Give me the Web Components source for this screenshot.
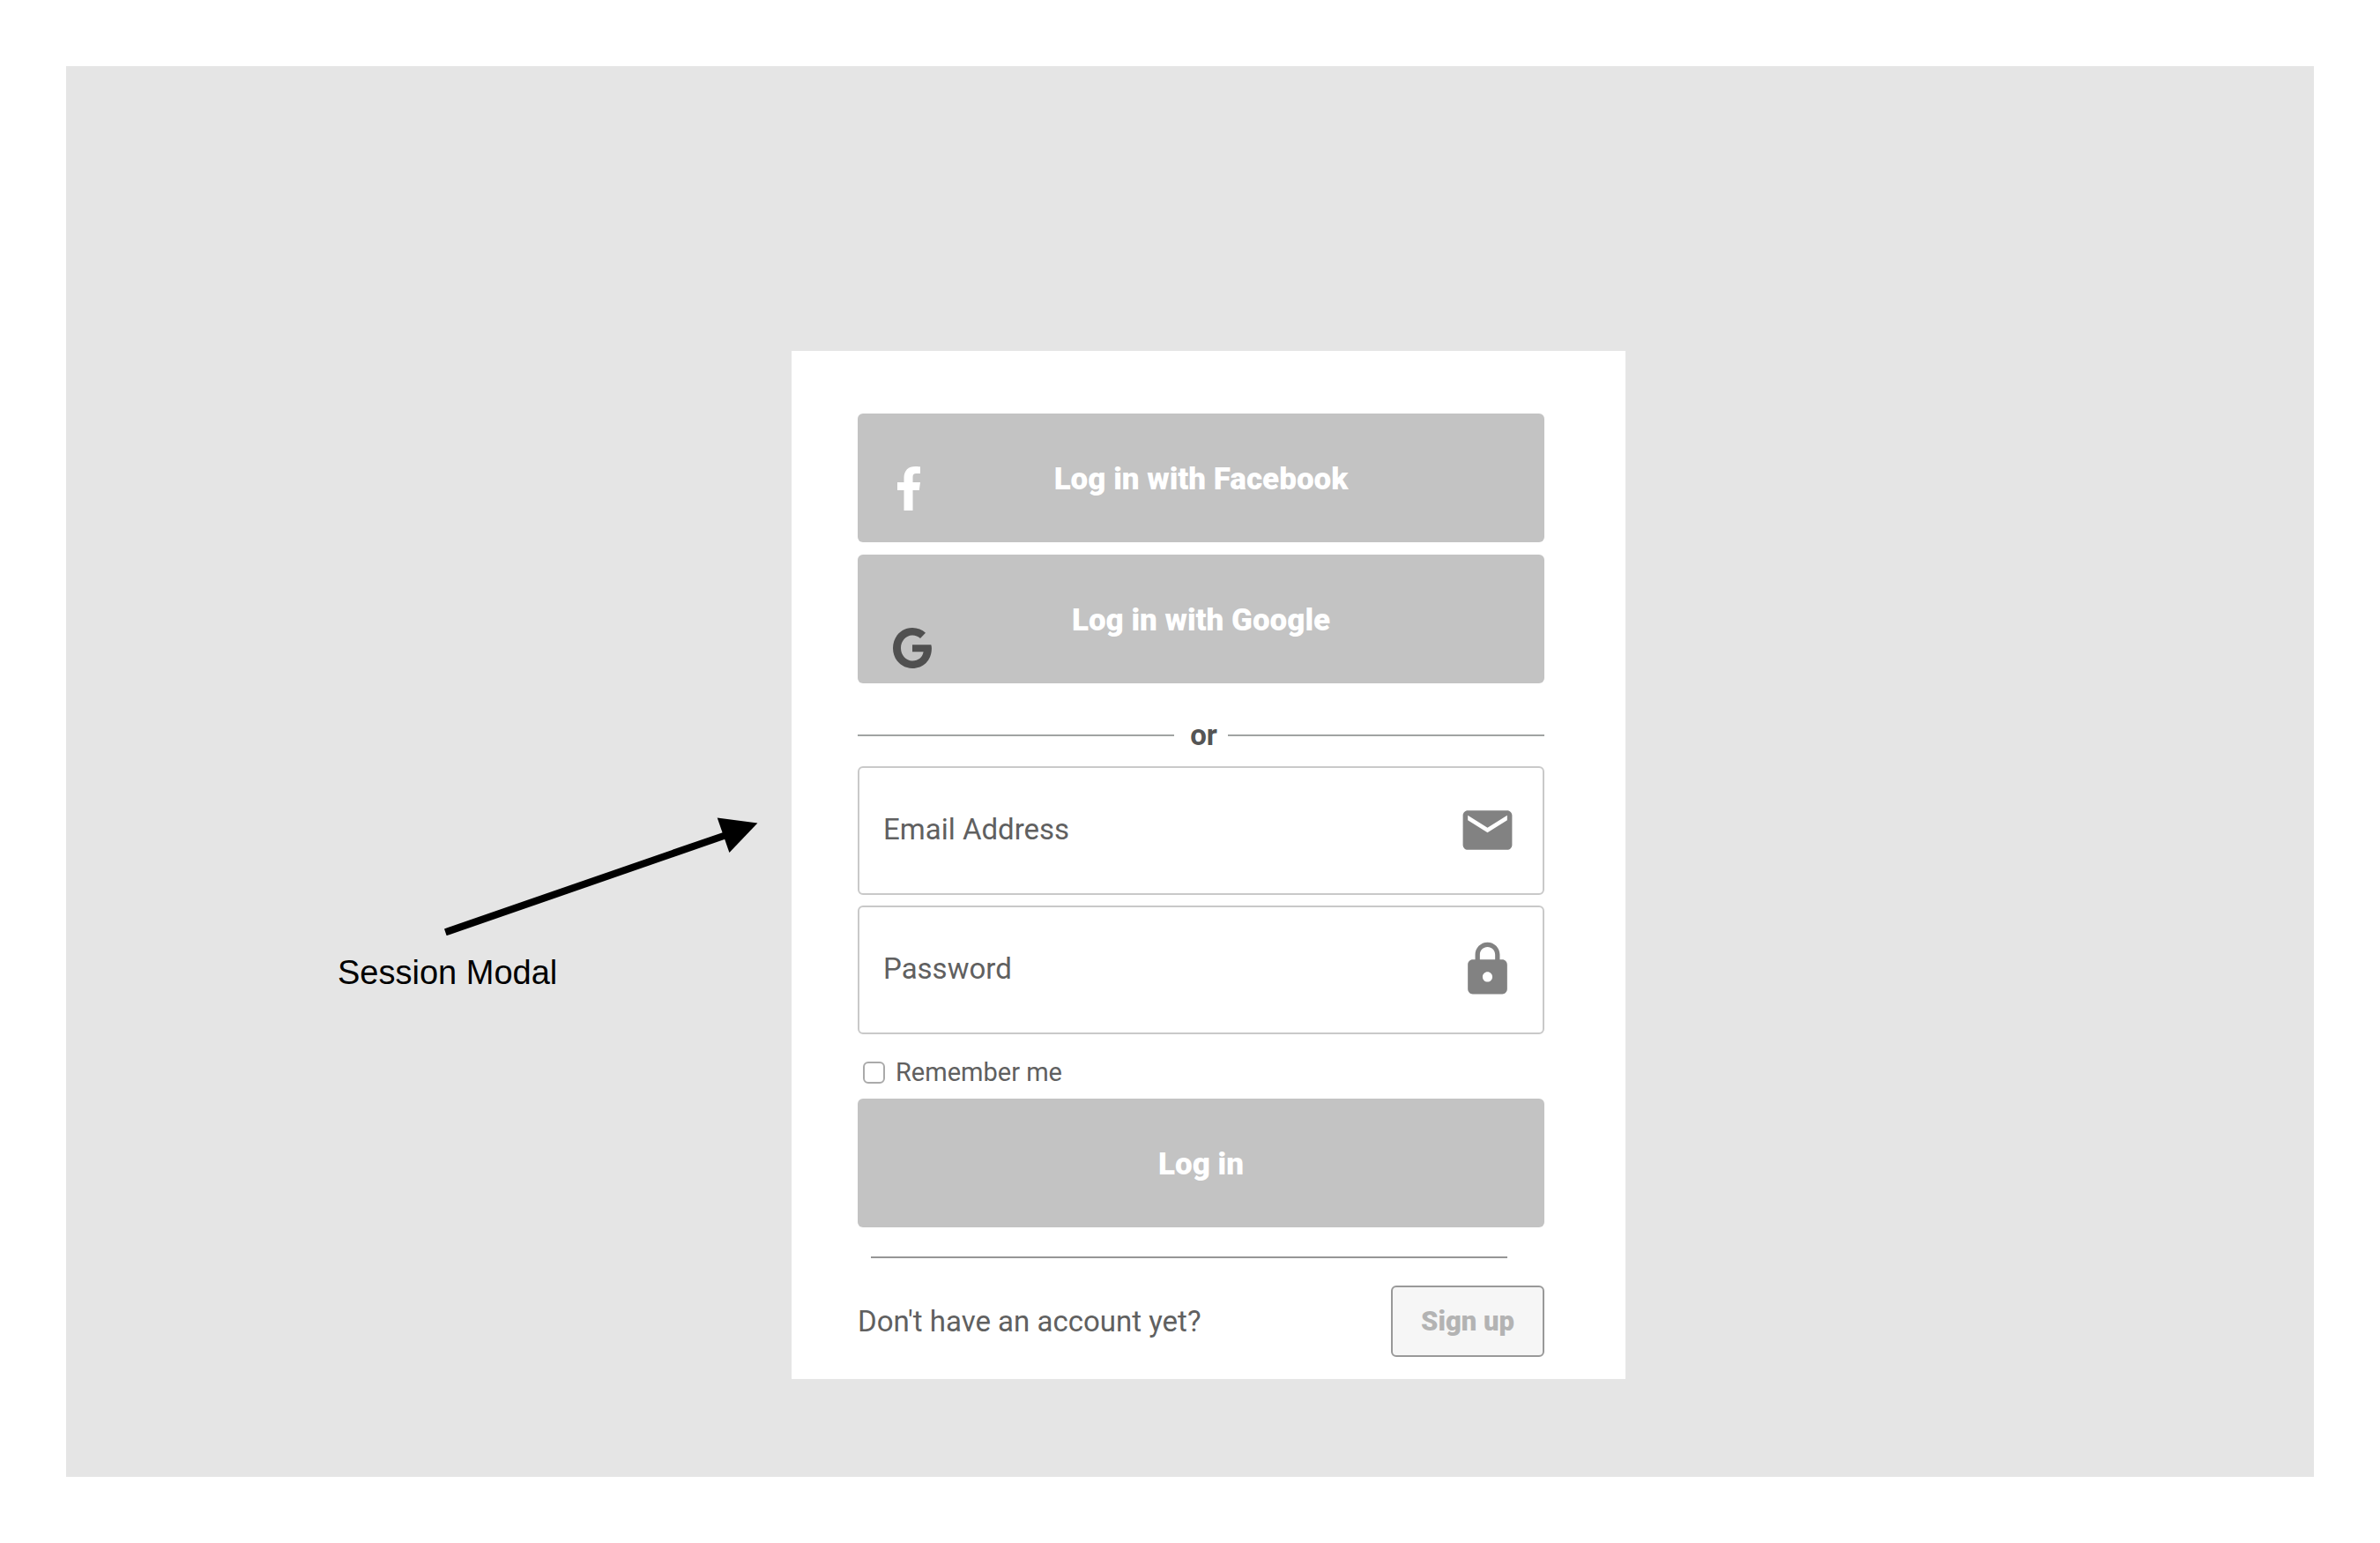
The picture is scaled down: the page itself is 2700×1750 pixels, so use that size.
<!DOCTYPE html>
<html lang="en">
<head>
<meta charset="utf-8">
<title>Session Modal</title>
<style>
  body { margin: 0; background: #fff; font-family: Roboto, "Liberation Sans", sans-serif; color: #555; }
</style>
</head>
<body>
<wire-canvas>
  <wire-note slot="note">Session Modal</wire-note>
  <session-modal></session-modal>
</wire-canvas>

<script>
const define = (name, html, setup) => {
  const template = document.createElement('template');
  template.innerHTML = html;
  customElements.define(name, class extends HTMLElement {
    constructor() {
      super();
      this.attachShadow({ mode: 'open' }).append(template.content.cloneNode(true));
    }
    connectedCallback() { if (setup) setup(this, this.shadowRoot); }
  });
};

const ICONS = {
  facebook: ['0 0 26 50', 'M7.500 50V27H0V18H7.500V13C7.500 4.500 12.500 0 20.500 0C23 0 26 .4 26 .4V8H21.500C18.500 8 17.500 9.500 17.500 12V18H26L24.800 27H17.500V50Z'],
  google: ['0 0 44 46', 'M22 19.300H43.300C43.800 21 44 22.300 43.900 24C43.600 37 34.500 46 22 46C9.500 46 0 36 0 23C0 10 9.500 0 22 0C28 0 33 2.200 37 5.800L31 12C28.600 9.700 25.600 8.500 22 8.500C14.800 8.500 9 15 9 23C9 31 14.800 37.500 22 37.500C29 37.500 33.500 33.500 34.600 27.300H22Z'],
  mail: ['0 0 24 24', 'M20 4H4c-1.100 0-1.990.9-1.990 2L2 18c0 1.100.9 2 2 2h16c1.100 0 2-.9 2-2V6c0-1.100-.9-2-2-2zm0 4l-8 5-8-5V6l8 5 8-5v2z'],
  lock: ['0 0 24 24', 'M18 8h-1V6c0-2.760-2.240-5-5-5S7 3.240 7 6v2H6c-1.100 0-2 .9-2 2v10c0 1.100.9 2 2 2h12c1.100 0 2-.9 2-2V10c0-1.100-.9-2-2-2zm-6 9c-1.100 0-2-.9-2-2s.9-2 2-2 2 .9 2 2-.9 2-2 2zm3.100-9H8.900V6c0-1.710 1.390-3.100 3.100-3.100s3.100 1.390 3.100 3.100v2z']
};

define('wire-icon', `
  <style>
    :host { display: block; flex: none; }
    svg { display: block; width: 100%; height: 100%; fill: currentColor; }
  </style>
  <svg aria-hidden="true"><path/></svg>`,
  (host, root) => {
    const [box, d] = ICONS[host.getAttribute('name')];
    root.querySelector('svg').setAttribute('viewBox', box);
    root.querySelector('path').setAttribute('d', d);
  });

define('wire-canvas', `
  <style>
    :host { display: block; padding: 75px; }
    main {
      display: grid; grid-template-columns: 823fr minmax(0, 946px) 781fr; align-items: start;
      box-sizing: border-box; min-height: calc(100vh - 150px); padding: 323px 0 111px; background: #e5e5e5;
    }
  </style>
  <main><slot name="note"></slot><slot></slot></main>`);

define('wire-note', `
  <style>
    :host {
      display: flex; flex-direction: column; gap: 21px; justify-self: end; width: 477px;
      padding: 529px 38px 0 0; font: 38px/42px "Liberation Sans", sans-serif; color: #000;
    }
    svg { display: block; width: 356px; height: 134px; align-self: flex-end; }
  </style>
  <svg viewBox="0 0 356 134" aria-hidden="true">
    <path d="M1.300 130.300L320 20" stroke="#000" stroke-width="8.200"/>
    <path d="M309.700 .5L355.400 6.400L323.400 40Z"/>
  </svg>
  <span><slot></slot></span>`);

define('wire-button', `
  <style>
    :host { display: block; color: #fff; }
    button {
      display: grid; grid-template-columns: 1fr auto 1fr; align-items: center; width: 100%; height: 146px;
      margin: 0; padding: 3px 40px 0; border: 0; border-radius: 6px; background: #c3c3c3; color: inherit;
      font: 900 35px/40px Roboto, sans-serif;
    }
    span { grid-column: 2; }
    ::slotted(wire-icon) { grid-column: 1; grid-row: 1; align-self: end; }
    :host([kind=outline]) { color: #b3b3b3; }
    :host([kind=outline]) button {
      height: 81px; padding: 0 32px; border: 2px solid #999; background: #f6f6f6; font-size: 31px;
    }
  </style>
  <button type="button"><slot name="icon"></slot><span><slot></slot></span></button>`);

define('wire-field', `
  <style>
    :host { display: block; }
    div {
      display: flex; align-items: center; box-sizing: border-box; height: 146px; padding: 0 29px 2px 27px;
      border: 2px solid #c9c9c9; border-radius: 6px; background: #fff;
    }
    input {
      flex: 1; min-width: 0; margin: 0; padding: 0; border: 0; outline: 0; background: none;
      font: 33px/40px Roboto, sans-serif; color: #555;
    }
    input::placeholder { color: #606060; opacity: 1; }
    wire-icon { width: 67px; height: 67px; color: #828282; }
  </style>
  <div><input></div>`,
  (host, root) => {
    const input = root.querySelector('input');
    input.type = host.getAttribute('type');
    input.placeholder = host.getAttribute('label');
    input.setAttribute('aria-label', host.getAttribute('label'));
    const icon = document.createElement('wire-icon');
    icon.setAttribute('name', host.getAttribute('icon'));
    input.after(icon);
  });

define('wire-check', `
  <style>
    :host { display: block; }
    label { display: flex; align-items: center; gap: 12px; padding-left: 6px; font-size: 29px; line-height: 32px; }
    input {
      appearance: none; width: 25px; height: 25px; margin: 0; border: 2px solid #aaa;
      border-radius: 6px; background: #fff;
    }
  </style>
  <label><input type="checkbox"><span><slot></slot></span></label>`);

define('wire-or', `
  <style>
    :host { display: flex; align-items: center; font-weight: 700; font-size: 33px; line-height: 38px; }
    i { flex: 1; height: 2px; background: #a0a3a2; }
    span { padding: 0 12px 0 18px; }
  </style>
  <i></i><span><slot></slot></span><i></i>`);

define('session-modal', `
  <style>
    :host { display: block; box-sizing: border-box; padding: 71px 92px 25px 75px; background: #fff; }
    form { display: flex; flex-direction: column; }
    .social { display: grid; gap: 14px; }
    .fields { display: grid; gap: 12px; }
    wire-or { margin: 40px 0 16px; }
    wire-check { margin: 27px 0 14px; color: #606060; }
    hr { height: 2px; margin: 33px 42px 31px 15px; border: 0; background: #969696; }
    .facebook { width: 26px; height: 50px; margin: 0 0 36px 5px; }
    .google { width: 44px; height: 46px; margin: 0 0 17px; color: #505050; }
    footer { display: flex; align-items: center; justify-content: space-between; font-size: 33px; line-height: 40px; color: #606060; }
  </style>
  <form>
    <div class="social">
      <wire-button><wire-icon slot="icon" class="facebook" name="facebook"></wire-icon>Log in with Facebook</wire-button>
      <wire-button><wire-icon slot="icon" class="google" name="google"></wire-icon>Log in with Google</wire-button>
    </div>
    <wire-or>or</wire-or>
    <div class="fields">
      <wire-field type="email" label="Email Address" icon="mail"></wire-field>
      <wire-field type="password" label="Password" icon="lock"></wire-field>
    </div>
    <wire-check>Remember me</wire-check>
    <wire-button>Log in</wire-button>
    <hr>
    <footer><span>Don't have an account yet?</span><wire-button kind="outline">Sign up</wire-button></footer>
  </form>`);
</script>
</body>
</html>
